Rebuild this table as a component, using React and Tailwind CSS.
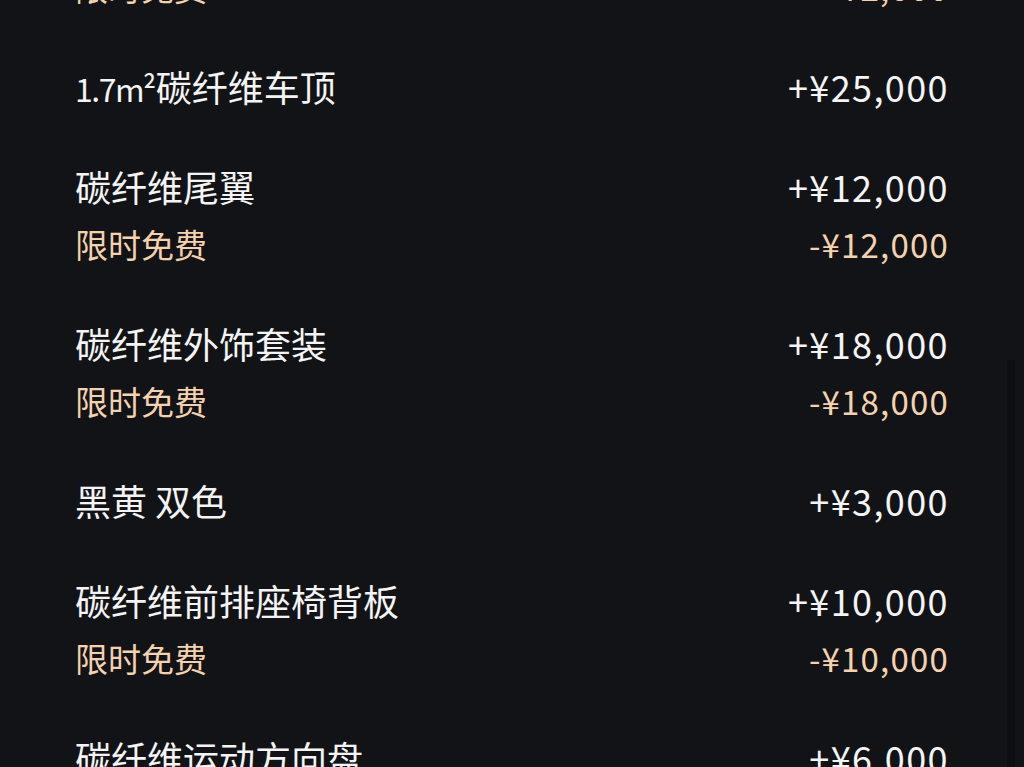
import React from "react";

const rows = [
  { title: null, price: null, sub: "限时免费", subPrice: "-¥2,000" },
  { title: (<><span className="text-[32px] tracking-[-1.5px] mr-[1px]">1.7m²</span>碳纤维车顶</>), price: "+¥25,000" },
  { title: "碳纤维尾翼", price: "+¥12,000", sub: "限时免费", subPrice: "-¥12,000" },
  { title: "碳纤维外饰套装", price: "+¥18,000", sub: "限时免费", subPrice: "-¥18,000" },
  { title: "黑黄 双色", price: "+¥3,000" },
  { title: "碳纤维前排座椅背板", price: "+¥10,000", sub: "限时免费", subPrice: "-¥10,000" },
  { title: "碳纤维运动方向盘", price: "+¥6,000" },
];

export default function App() {
  return (
    <div
      className="relative w-[1024px] h-[767px] overflow-hidden bg-[#121317] text-white"
      style={{ fontFamily: '"Noto Sans CJK SC", "Noto Sans", sans-serif' }}
    >
      <div className="flex flex-col gap-[43px] pl-[75px] pr-[76px] mt-[-41px]">
        {rows.map((r, i) => (
          <div key={i} className="flex flex-col">
            {r.title && (
              <div className="flex h-[57px] pb-[3px] items-center justify-between text-[36px] text-[#f4f4f4]">
                <span>{r.title}</span>
                <span className="tracking-[1.4px] mr-[-1px]">{r.price}</span>
              </div>
            )}
            {r.sub && (
              <div className="flex h-[57px] items-center justify-between text-[33px] text-[#f3d2ad]">
                <span>{r.sub}</span>
                <span className="tracking-[1.2px] mr-[-1px]">{r.subPrice}</span>
              </div>
            )}
          </div>
        ))}
      </div>
      <div className="absolute right-[9px] top-[360px] h-[420px] w-[8px] bg-[#0d0e11]" />
    </div>
  );
}
